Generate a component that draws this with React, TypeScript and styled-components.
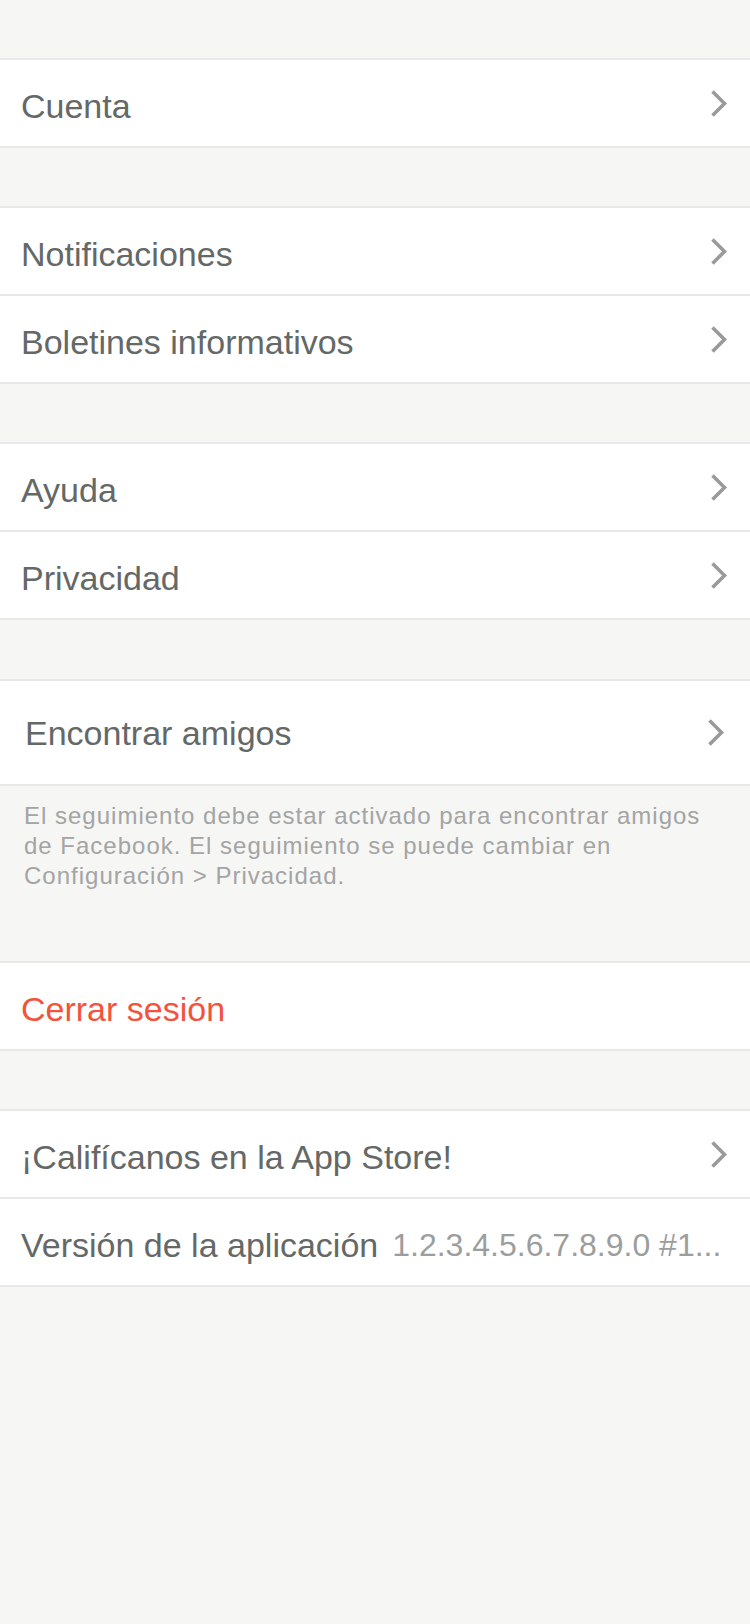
import { Fragment } from "react";
import styled, { createGlobalStyle } from "styled-components";

const GlobalStyle = createGlobalStyle`
  html, body {
    margin: 0;
    padding: 0;
    background-color: #f6f6f5;
  }
  body {
    font-family: "Liberation Sans", Arial, sans-serif;
    -webkit-font-smoothing: antialiased;
  }
`;

type Item = {
  label: string;
  value?: string;
  chevron?: boolean;
  danger?: boolean;
};

type Section = {
  gap: number;
  items: Item[];
  footer?: string;
  tall?: boolean;
};

const sections: Section[] = [
  { gap: 58, items: [{ label: "Cuenta", chevron: true }] },
  {
    gap: 58,
    items: [
      { label: "Notificaciones", chevron: true },
      { label: "Boletines informativos", chevron: true },
    ],
  },
  {
    gap: 58,
    items: [
      { label: "Ayuda", chevron: true },
      { label: "Privacidad", chevron: true },
    ],
  },
  {
    gap: 59,
    tall: true,
    items: [{ label: "Encontrar amigos", chevron: true }],
    footer:
      "El seguimiento debe estar activado para encontrar amigos de Facebook. El seguimiento se puede cambiar en Configuración > Privacidad.",
  },
  { gap: 0, items: [{ label: "Cerrar sesión", danger: true }] },
  {
    gap: 58,
    items: [
      { label: "¡Califícanos en la App Store!", chevron: true },
      { label: "Versión de la aplicación", value: "1.2.3.4.5.6.7.8.9.0 #1..." },
    ],
  },
];

const Page = styled.div`
  min-height: 1624px;
  background-color: #f6f6f5;
  display: flex;
  flex-direction: column;
`;

const Gap = styled.div<{ $h: number }>`
  height: ${(p) => p.$h}px;
`;

const Group = styled.div`
  background-color: #ffffff;
  border-top: 2px solid #e8e8e7;
  border-bottom: 2px solid #e8e8e7;
  display: flex;
  flex-direction: column;
`;

const Divider = styled.div`
  height: 2px;
  background-color: #e8e8e7;
`;

const Row = styled.div<{ $tall?: boolean }>`
  display: flex;
  align-items: center;
  height: ${(p) => (p.$tall ? 103 : 86)}px;
  padding: ${(p) => (p.$tall ? "0 25px 0 25px" : "0 22px 0 21px")};
  box-sizing: border-box;
`;

const Label = styled.span<{ $danger?: boolean; $tall?: boolean }>`
  flex-shrink: 0;
  font-size: 34px;
  line-height: 34px;
  padding-top: ${(p) => (p.$tall ? 0 : 6)}px;
  color: ${(p) => (p.$danger ? "#f4523c" : "#646867")};
  white-space: nowrap;
`;

const Value = styled.span`
  flex: 1;
  min-width: 0;
  margin-left: 14px;
  padding-top: 6px;
  font-size: 32px;
  line-height: 34px;
  color: #9c9e9d;
  white-space: nowrap;
  overflow: hidden;
`;

const Spacer = styled.div`
  flex: 1;
`;

const Chevron = styled.svg`
  width: 18px;
  height: 29px;
  flex-shrink: 0;
  display: block;
`;

const Footer = styled.p`
  margin: 0;
  padding: 15px 24px 70px 24px;
  font-size: 24px;
  line-height: 30px;
  letter-spacing: 1px;
  color: #a3a4a3;
`;

function ChevronIcon() {
  return (
    <Chevron viewBox="0 0 18 29" fill="none">
      <polyline
        points="2.5,2.5 14.5,14.5 2.5,26.5"
        stroke="#999a9a"
        strokeWidth="3.6"
        strokeLinecap="butt"
        strokeLinejoin="miter"
      />
    </Chevron>
  );
}

export default function App() {
  return (
    <>
      <GlobalStyle />
      <Page>
        {sections.map((section, i) => (
          <Fragment key={i}>
            <Gap $h={section.gap} />
            <Group>
              {section.items.map((item, j) => (
                <Fragment key={item.label}>
                  {j > 0 && <Divider />}
                  <Row $tall={section.tall}>
                    <Label $danger={item.danger} $tall={section.tall}>
                      {item.label}
                    </Label>
                    {item.value ? <Value>{item.value}</Value> : <Spacer />}
                    {item.chevron && <ChevronIcon />}
                  </Row>
                </Fragment>
              ))}
            </Group>
            {section.footer && <Footer>{section.footer}</Footer>}
          </Fragment>
        ))}
      </Page>
    </>
  );
}
